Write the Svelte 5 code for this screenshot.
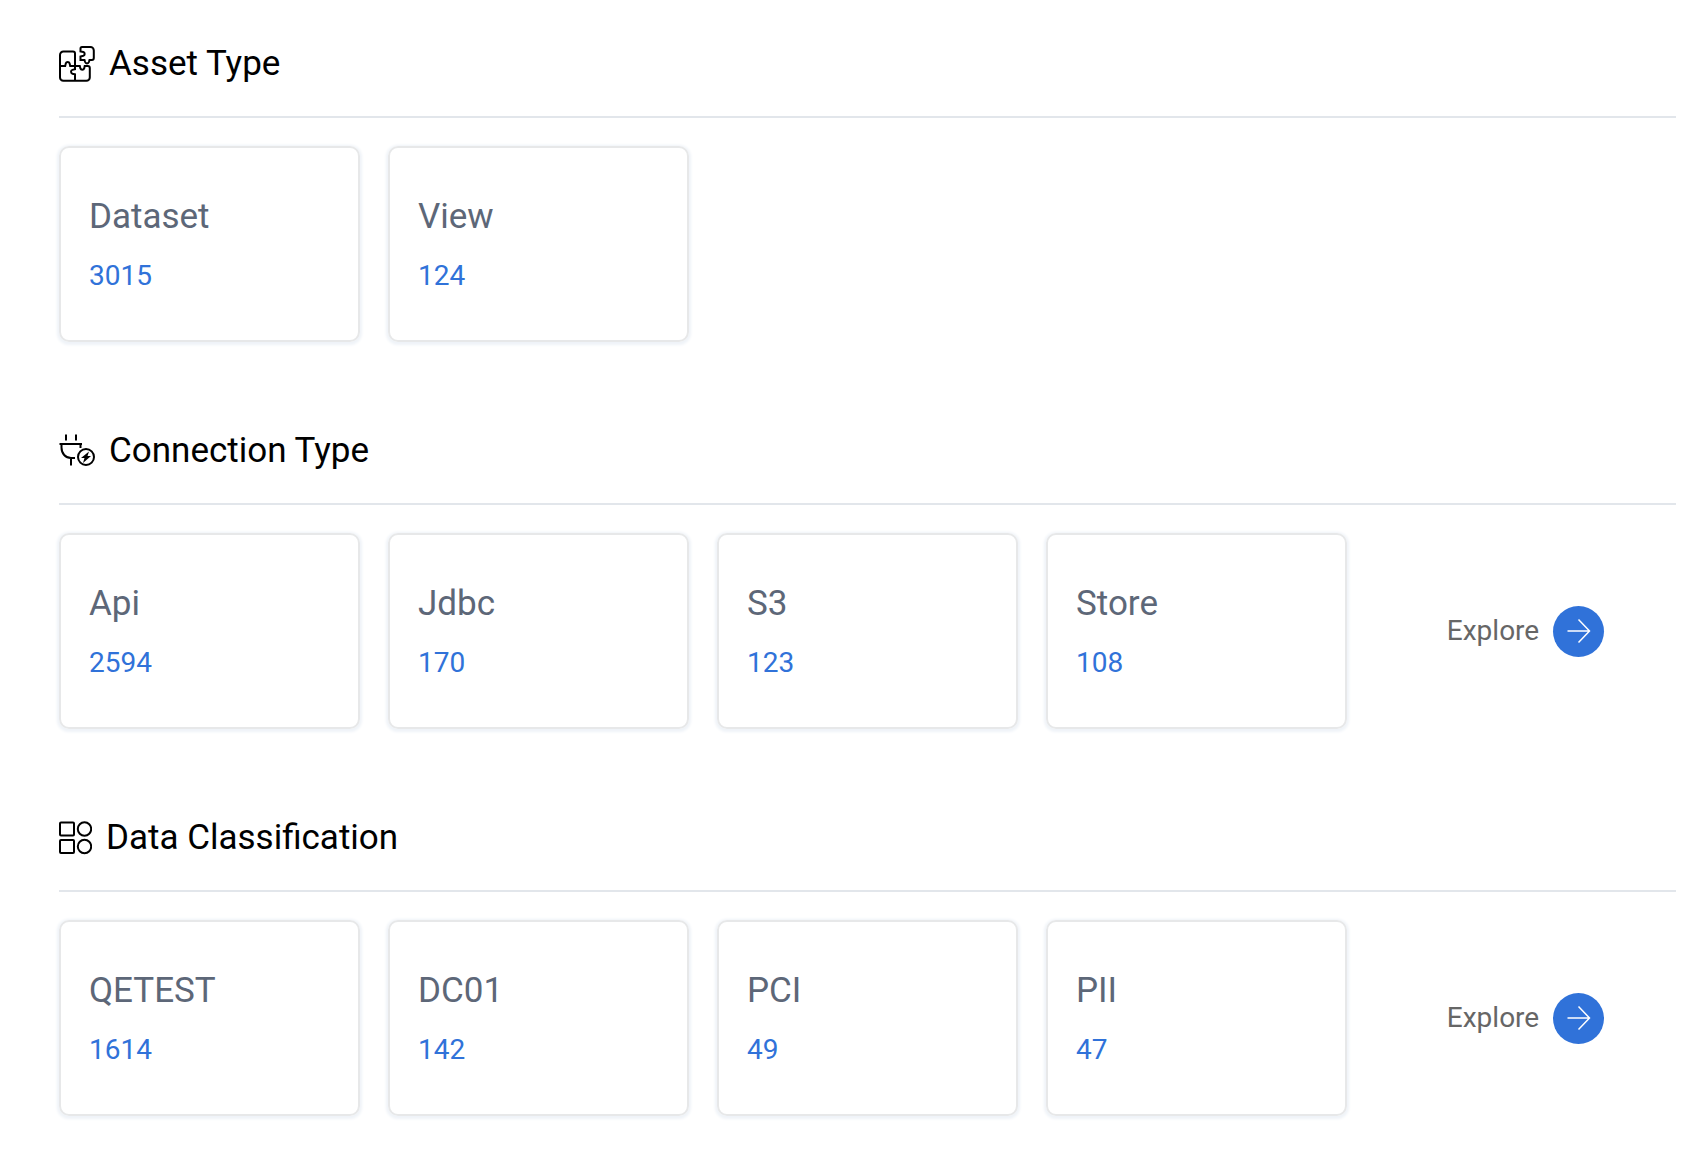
<script>
  const sections = [
    {
      title: 'Asset Type',
      icon: 'puzzle',
      cards: [
        { name: 'Dataset', count: 3015 },
        { name: 'View', count: 124 }
      ]
    },
    {
      title: 'Connection Type',
      icon: 'plug',
      explore: true,
      cards: [
        { name: 'Api', count: 2594 },
        { name: 'Jdbc', count: 170 },
        { name: 'S3', count: 123 },
        { name: 'Store', count: 108 }
      ]
    },
    {
      title: 'Data Classification',
      icon: 'shapes',
      explore: true,
      cards: [
        { name: 'QETEST', count: 1614 },
        { name: 'DC01', count: 142 },
        { name: 'PCI', count: 49 },
        { name: 'PII', count: 47 }
      ]
    }
  ];
</script>

<main>
  {#each sections as section}
    <section>
      <header>
        {#if section.icon === 'puzzle'}
          <svg class="icon" width="36" height="36" viewBox="0 0 36 36" aria-hidden="true">
            <path d="M16 20V7.500a2 2 0 0 0-2-2H4.400A3.400 3.400 0 0 0 1 8.900V31.400a3.400 3.400 0 0 0 3.400 3.400H27.400a3.400 3.400 0 0 0 3.400-3.400V22a2 2 0 0 0-2-2H25.700l-.5 2.400a2 2 0 0 1-3.800 0L20.800 20H16v3.300l-2.600.6a2 2 0 0 0 0 3.800l2.600.6V34.800" />
            <path d="M1 20H6.200l.6-2.600a2 2 0 0 1 3.800 0L11.200 20H16" />
            <path d="M21.500 2.500A1.500 1.500 0 0 1 23 1H31.400A3.400 3.400 0 0 1 34.800 4.400V12a2 2 0 0 1-2 2H30.500l-.6 2a2 2 0 0 1-3.800 0L25.500 14H21.500V10.600l2.800-.8a2 2 0 0 0 0-3.800L21.500 5.400z" />
          </svg>
        {:else if section.icon === 'plug'}
          <svg class="icon" width="36" height="36" viewBox="0 1 36 36" aria-hidden="true">
            <path d="M7 2.500V8.500M17 2.500V8.500M.5 12H23M2.500 12v3.500C2.500 21.500 6.500 26 12 26H16M12 26V33.500M21.500 12V16" />
            <circle cx="27" cy="25" r="8" />
            <path class="solid" d="M30 19.500 22 26H25.500L24 31 32 24H28.500z" />
          </svg>
        {:else}
          <svg class="icon" width="33" height="36" viewBox="0 0 33 36" aria-hidden="true">
            <rect x="1" y="2.500" width="14" height="13" rx="1" />
            <rect x="1" y="20" width="14" height="13" rx="1" />
            <circle cx="25.500" cy="9" r="6.700" />
            <circle cx="25.500" cy="26.500" r="6.700" />
          </svg>
        {/if}
        <h2>{section.title}</h2>
      </header>
      <div class="row">
        {#each section.cards as card}
          <a class="card" href="#{card.name}">
            <span class="name">{card.name}</span>
            <span class="count">{card.count}</span>
          </a>
        {/each}
        {#if section.explore}
          <div class="more">
            <button type="button">
              Explore
              <span class="arrow">
                <svg width="24" height="26" viewBox="0 0 24 26" aria-hidden="true">
                  <path d="M.5 13H22M11.500 1.500 22.500 13 11.500 24.500" />
                </svg>
              </span>
            </button>
          </div>
        {/if}
      </div>
    </section>
  {/each}
</main>

<style>
  :global(body) {
    background: #fff;
    font-family: Roboto, sans-serif;
  }
  main {
    padding: 0 22px 0 59px;
  }
  section {
    padding-bottom: 45px;
  }
  header {
    display: flex;
    align-items: center;
    gap: 14px;
    padding: 40px 0 28px;
    border-bottom: 2px solid #e2e6eb;
  }
  h2 {
    margin: 0;
    font-size: 35px;
    line-height: 48px;
    font-weight: 400;
    color: #000;
  }
  .icon {
    fill: none;
    stroke: #000;
    stroke-width: 2;
  }
  .icon .solid {
    fill: #000;
    stroke: none;
  }
  .row {
    display: flex;
    gap: 28px;
    padding-top: 28px;
  }
  .card {
    box-sizing: border-box;
    display: flex;
    flex-direction: column;
    gap: 14px;
    flex: 0 1 301px;
    padding: 44px 28px;
    border: 2px solid #e7e8e9;
    border-radius: 10px;
    box-shadow: 0 1px 3px 2px #eff3f8;
    text-decoration: none;
  }
  .name {
    font-size: 35px;
    line-height: 50px;
    color: #5d6778;
  }
  .count {
    font-size: 28px;
    line-height: 40px;
    color: #3072d9;
  }
  .more {
    flex: 1;
    display: flex;
    align-items: center;
    justify-content: center;
  }
  button {
    display: flex;
    align-items: center;
    gap: 14px;
    padding: 0;
    border: 0;
    background: none;
    font: 28px/40px Roboto, sans-serif;
    color: #666;
    cursor: pointer;
  }
  .arrow {
    display: flex;
    align-items: center;
    justify-content: center;
    width: 51px;
    height: 51px;
    border-radius: 50%;
    background: #3072d9;
  }
  .arrow svg {
    fill: none;
    stroke: #fff;
    stroke-width: 1.5;
  }
</style>
